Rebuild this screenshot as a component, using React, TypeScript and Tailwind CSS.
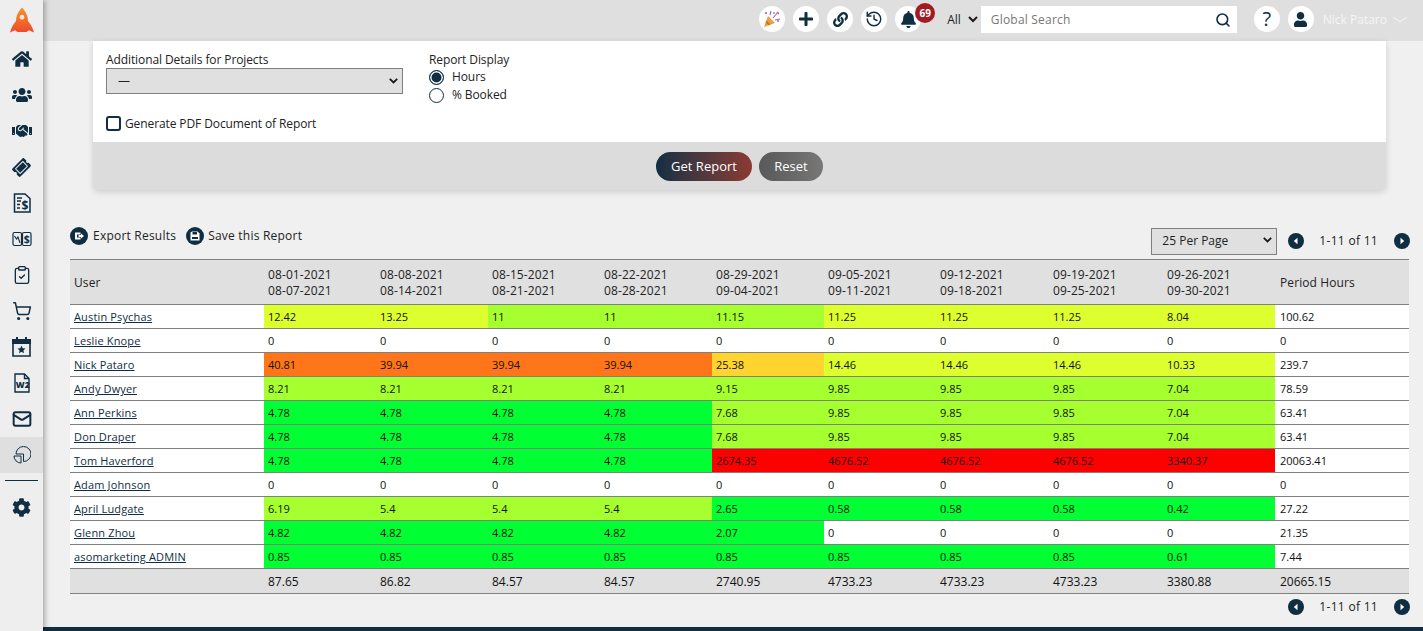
import { ClipboardCheck, History, Mail, Search, ShoppingCart } from "lucide-react";
import { FaBell, FaCog, FaHandshake, FaHome, FaLink, FaPlus, FaTicketAlt, FaUser, FaUsers } from "react-icons/fa";

const navy = "#0f2e42";

type Tone = "w" | "g" | "y" | "l" | "o" | "a" | "r";

const toneClass: Record<Tone, string> = {
  w: "bg-white",
  g: "bg-[#00ff33]",
  y: "bg-[#a6ff2e]",
  l: "bg-[#deff2e]",
  o: "bg-[#ff7519]",
  a: "bg-[#ffd42e]",
  r: "bg-[#ff0000]",
};

const weeks = [
  ["08-01-2021", "08-07-2021"],
  ["08-08-2021", "08-14-2021"],
  ["08-15-2021", "08-21-2021"],
  ["08-22-2021", "08-28-2021"],
  ["08-29-2021", "09-04-2021"],
  ["09-05-2021", "09-11-2021"],
  ["09-12-2021", "09-18-2021"],
  ["09-19-2021", "09-25-2021"],
  ["09-26-2021", "09-30-2021"],
];

const rows: { name: string; cells: [string, Tone][]; total: string }[] = [
  { name: "Austin Psychas", total: "100.62", cells: [["12.42", "l"], ["13.25", "l"], ["11", "y"], ["11", "y"], ["11.15", "y"], ["11.25", "l"], ["11.25", "l"], ["11.25", "l"], ["8.04", "l"]] },
  { name: "Leslie Knope", total: "0", cells: [["0", "w"], ["0", "w"], ["0", "w"], ["0", "w"], ["0", "w"], ["0", "w"], ["0", "w"], ["0", "w"], ["0", "w"]] },
  { name: "Nick Pataro", total: "239.7", cells: [["40.81", "o"], ["39.94", "o"], ["39.94", "o"], ["39.94", "o"], ["25.38", "a"], ["14.46", "l"], ["14.46", "l"], ["14.46", "l"], ["10.33", "l"]] },
  { name: "Andy Dwyer", total: "78.59", cells: [["8.21", "y"], ["8.21", "y"], ["8.21", "y"], ["8.21", "y"], ["9.15", "y"], ["9.85", "y"], ["9.85", "y"], ["9.85", "y"], ["7.04", "y"]] },
  { name: "Ann Perkins", total: "63.41", cells: [["4.78", "g"], ["4.78", "g"], ["4.78", "g"], ["4.78", "g"], ["7.68", "y"], ["9.85", "y"], ["9.85", "y"], ["9.85", "y"], ["7.04", "y"]] },
  { name: "Don Draper", total: "63.41", cells: [["4.78", "g"], ["4.78", "g"], ["4.78", "g"], ["4.78", "g"], ["7.68", "y"], ["9.85", "y"], ["9.85", "y"], ["9.85", "y"], ["7.04", "y"]] },
  { name: "Tom Haverford", total: "20063.41", cells: [["4.78", "g"], ["4.78", "g"], ["4.78", "g"], ["4.78", "g"], ["2674.35", "r"], ["4676.52", "r"], ["4676.52", "r"], ["4676.52", "r"], ["3340.37", "r"]] },
  { name: "Adam Johnson", total: "0", cells: [["0", "w"], ["0", "w"], ["0", "w"], ["0", "w"], ["0", "w"], ["0", "w"], ["0", "w"], ["0", "w"], ["0", "w"]] },
  { name: "April Ludgate", total: "27.22", cells: [["6.19", "y"], ["5.4", "y"], ["5.4", "y"], ["5.4", "y"], ["2.65", "g"], ["0.58", "g"], ["0.58", "g"], ["0.58", "g"], ["0.42", "g"]] },
  { name: "Glenn Zhou", total: "21.35", cells: [["4.82", "g"], ["4.82", "g"], ["4.82", "g"], ["4.82", "g"], ["2.07", "g"], ["0", "w"], ["0", "w"], ["0", "w"], ["0", "w"]] },
  { name: "asomarketing ADMIN", total: "7.44", cells: [["0.85", "g"], ["0.85", "g"], ["0.85", "g"], ["0.85", "g"], ["0.85", "g"], ["0.85", "g"], ["0.85", "g"], ["0.85", "g"], ["0.61", "g"]] },
];

const totals = ["87.65", "86.82", "84.57", "84.57", "2740.95", "4733.23", "4733.23", "4733.23", "3380.88"];

function Rocket() {
  return (
    <svg width="24" height="27" viewBox="0 0 26 28">
      <defs>
        <linearGradient id="rocket" x1="0" y1="0" x2="0" y2="1">
          <stop offset="0" stopColor="#f7922e" />
          <stop offset="1" stopColor="#ec4a2a" />
        </linearGradient>
      </defs>
      <path
        d="M13 0C17 4 19.500 9 19.500 14.500C21.500 17 24.500 21 26 27L20.500 24.500L18 26.500H8L5.500 24.500L0 27C1.500 21 4.500 17 6.500 14.500C6.500 9 9 4 13 0Z"
        fill="url(#rocket)"
      />
      <circle cx="13" cy="10.500" r="2.600" fill="#fde6d8" />
    </svg>
  );
}

function InvoiceIcon() {
  return (
    <svg width="18" height="20" viewBox="0 0 18 20" fill="none" stroke={navy} strokeWidth="1.500">
      <path d="M1.500 1H12L17 5.500V19H1.500Z" />
      <path d="M4 5H9M4 8H8M4 11.500H7M4 15H7" />
      <text x="8.500" y="16.500" fontSize="12" fontWeight="700" fill={navy} stroke="none" fontFamily="Open Sans, sans-serif">$</text>
    </svg>
  );
}

function LedgerIcon() {
  return (
    <svg width="20" height="16" viewBox="0 0 20 16" fill="none" stroke={navy} strokeWidth="1.200">
      <rect x="1" y="1.500" width="8.500" height="13" rx="1.500" />
      <rect x="10.500" y="1.500" width="8.500" height="13" rx="1.500" />
      <path d="M2.500 5L4.500 8L6 6L8 12" strokeWidth="1.100" />
      <text x="11.800" y="12" fontSize="10.500" fontWeight="700" fill={navy} stroke="none" fontFamily="Open Sans, sans-serif">$</text>
    </svg>
  );
}

function CalendarStarIcon() {
  return (
    <svg width="19" height="20" viewBox="0 0 19 20">
      <path d="M4 0H6V2H13V0H15V2H19V7H0V2H4Z" fill={navy} />
      <path d="M1 6H18V19H1Z" fill="none" stroke={navy} strokeWidth="1.600" />
      <path d="M9.500 8.500L10.700 11.200L13.500 11.500L11.400 13.400L12 16.200L9.500 14.800L7 16.200L7.600 13.400L5.500 11.500L8.300 11.200Z" fill={navy} />
    </svg>
  );
}

function W2Icon() {
  return (
    <svg width="16" height="20" viewBox="0 0 16 20" fill="none" stroke={navy} strokeWidth="1.400">
      <path d="M1 1H10.500L15 5.500V19H1Z" />
      <path d="M10.500 1V5.500H15" />
      <text x="1.800" y="15" fontSize="8.500" fontWeight="800" fill={navy} stroke="none" fontFamily="Open Sans, sans-serif">W2</text>
    </svg>
  );
}

function PieIcon() {
  return (
    <svg width="18" height="18" viewBox="0 0 18 18" fill="none" stroke={navy} strokeWidth="1">
      <path d="M3 8A7.500 7.500 0 1 1 10.500 15.500V8Z" />
      <path d="M1 10H8V17A7 7 0 0 1 1 10Z" />
    </svg>
  );
}

function PartyIcon() {
  return (
    <svg width="18" height="18" viewBox="0 0 18 18">
      <path d="M1 17L5 6L12 13Z" fill="#e9a23b" />
      <path d="M3.500 10.500L7.500 14.500L5.500 15.300L2.700 12.500Z" fill="#c9702a" />
      <circle cx="3" cy="3" r="1.100" fill="#d94b8c" />
      <circle cx="15" cy="11" r="1" fill="#4a90d9" />
      <circle cx="11" cy="3" r="1" fill="#5cb85c" />
      <path d="M7 5L8 1M10 8L15 2M12 10L17 9" stroke="#b05cc9" strokeWidth="1.100" fill="none" />
      <path d="M14 2L16 4" stroke="#e0584f" strokeWidth="1.100" />
    </svg>
  );
}

function NavItem({ active, children }: { active?: boolean; children: React.ReactNode }) {
  return <div className={`flex h-9 items-center justify-center ${active ? "bg-[#dfdfdf]" : ""}`}>{children}</div>;
}

function Sidebar() {
  return (
    <aside className="relative z-10 flex h-full w-[43px] shrink-0 flex-col bg-[#eeeeee] shadow-[2px_0_5px_rgba(0,0,0,0.3)]">
      <div className="flex h-[41px] items-start justify-center pt-[7px]">
        <Rocket />
      </div>
      <NavItem><FaHome size={20} color={navy} /></NavItem>
      <NavItem><FaUsers size={20} color={navy} /></NavItem>
      <NavItem><FaHandshake size={20} color={navy} /></NavItem>
      <NavItem><FaTicketAlt size={17} color={navy} className="-rotate-45" /></NavItem>
      <NavItem><InvoiceIcon /></NavItem>
      <NavItem><LedgerIcon /></NavItem>
      <NavItem><ClipboardCheck size={20} color={navy} strokeWidth={1.600} /></NavItem>
      <NavItem><ShoppingCart size={20} color={navy} strokeWidth={1.800} /></NavItem>
      <NavItem><CalendarStarIcon /></NavItem>
      <NavItem><W2Icon /></NavItem>
      <NavItem><Mail size={20} color={navy} strokeWidth={2.400} /></NavItem>
      <NavItem active><PieIcon /></NavItem>
      <div className="mx-[5px] mt-[7px] h-px bg-[#0f2e42]" />
      <div className="mt-2">
        <NavItem><FaCog size={19} color={navy} /></NavItem>
      </div>
    </aside>
  );
}

function RoundIcon({ children }: { children: React.ReactNode }) {
  return <div className="flex h-[26px] w-[26px] shrink-0 items-center justify-center rounded-full bg-white">{children}</div>;
}

function TopBar() {
  return (
    <header className="flex h-[41px] shrink-0 items-start justify-end bg-[#dfdfdf] pt-[6px] pr-[16px]">
      <div className="flex items-center gap-2">
        <RoundIcon><PartyIcon /></RoundIcon>
        <RoundIcon><FaPlus size={16} color={navy} /></RoundIcon>
        <RoundIcon><FaLink size={15} color={navy} /></RoundIcon>
        <RoundIcon><History size={18} color={navy} strokeWidth={1.900} /></RoundIcon>
        <div className="relative">
          <RoundIcon><FaBell size={17} color={navy} /></RoundIcon>
          <span className="absolute -top-[3px] left-[20px] flex h-[20px] w-[20px] items-center justify-center rounded-full bg-[#a11c22] text-[10px] font-bold text-white">69</span>
        </div>
      </div>
      <span className="ml-[26px] flex h-[27px] items-center text-[12px] text-[#222]">All</span>
      <svg className="mt-[10px] ml-[7px]" width="10" height="7" viewBox="0 0 10 7" fill="none" stroke="#1a1a1a" strokeWidth="2">
        <path d="M1 1L5 5L9 1" />
      </svg>
      <div className="ml-[3px] flex h-[27px] w-[256px] items-center justify-between bg-white pr-[6px] pl-[10px]">
        <span className="text-[12px] tracking-[0.2px] text-[#777]">Global Search</span>
        <Search size={16} color={navy} strokeWidth={2.400} />
      </div>
      <div className="ml-[17px] flex items-center gap-2">
        <RoundIcon><span className="text-[20px] leading-none text-[#0f2e42]">?</span></RoundIcon>
        <RoundIcon><FaUser size={15} color={navy} /></RoundIcon>
      </div>
      <span className="ml-[9px] flex h-[27px] items-center text-[12px] text-[#f5f5f5]">Nick Pataro</span>
      <svg className="mt-[11px] ml-[6px]" width="14" height="6" viewBox="0 0 14 6" fill="none" stroke="#f5f5f5" strokeWidth="1">
        <path d="M0.500 0.500L7 4.500L13.500 0.500" />
      </svg>
    </header>
  );
}

function ReportForm() {
  return (
    <section className="mr-[37px] ml-[50px] rounded-b-[6px] bg-[#dcdcdc] shadow-[0_2px_6px_rgba(0,0,0,0.15)]">
      <div className="h-[101px] bg-white px-[13px] pt-[11px] text-[12px] tracking-[-0.1px] text-[#222]">
        <div className="flex">
          <div className="w-[323px]">
            <label className="block leading-[16px]">Additional Details for Projects</label>
            <div className="relative h-[26px] w-[297px]">
              <select className="h-full w-full appearance-none border border-[#808080] bg-[#e0e0e0] pl-[11px] text-[12px] text-[#222]">
                <option>—</option>
              </select>
              <svg className="pointer-events-none absolute top-[10px] right-[5px]" width="9" height="6" viewBox="0 0 9 6" fill="none" stroke="#1a1a1a" strokeWidth="1.800">
                <path d="M0.800 0.800L4.500 4.500L8.200 0.800" />
              </svg>
            </div>
          </div>
          <div>
            <div className="leading-[16px]">Report Display</div>
            <label className="flex h-[18px] items-center gap-2">
              <input type="radio" name="display" defaultChecked className="h-[15px] w-[15px] appearance-none rounded-full border border-[#0f2e42] checked:bg-[#0f2e42] checked:shadow-[inset_0_0_0_1.500px_white]" />
              Hours
            </label>
            <label className="flex h-[18px] items-center gap-2">
              <input type="radio" name="display" className="h-[15px] w-[15px] appearance-none rounded-full border border-[#0f2e42]" />
              % Booked
            </label>
          </div>
        </div>
        <label className="mt-[11px] flex h-[18px] items-center gap-1">
          <input type="checkbox" className="-mt-[2px] h-[15px] w-[15px] appearance-none rounded-[3px] border-2 border-[#0f2e42] bg-white" />
          Generate PDF Document of Report
        </label>
      </div>
      <div className="flex h-[48px] items-start justify-center gap-[7px] pt-[10px]">
        <button className="h-[29px] w-[96px] rounded-full bg-gradient-to-r from-[#0f2e42] to-[#8a3a32] text-[13px] text-white">Get Report</button>
        <button className="h-[29px] w-[64px] rounded-full bg-gradient-to-r from-[#595959] to-[#777777] text-[13px] text-white">Reset</button>
      </div>
    </section>
  );
}

function Pager() {
  return (
    <div className="flex items-center">
      <svg width="16" height="16" viewBox="0 0 16 16">
        <circle cx="8" cy="8" r="8" fill={navy} />
        <path d="M9.500 4.800V11.200L5.800 8Z" fill="white" />
      </svg>
      <span className="mr-[16px] ml-[15px] text-[12px] tracking-[0.3px] text-[#222]">1-11 of 11</span>
      <svg width="16" height="16" viewBox="0 0 16 16">
        <circle cx="8" cy="8" r="8" fill={navy} />
        <path d="M6.500 4.800V11.200L10.200 8Z" fill="white" />
      </svg>
    </div>
  );
}

function Toolbar() {
  return (
    <div className="mt-[37px] mr-[13px] ml-[27px] flex h-[27px] justify-between">
      <div className="flex h-[18px] items-center text-[12px] tracking-[0.22px] text-[#222]">
        <svg width="18" height="18" viewBox="0 0 18 18">
          <circle cx="9" cy="9" r="9" fill={navy} />
          <path d="M5 5.500H10.500V7.500H7V10.500H10.500V12.500H5Z" fill="white" />
          <path d="M8.500 8H11V6.500L14 9L11 11.500V10H8.500Z" fill="white" />
        </svg>
        <span className="ml-[5px]">Export Results</span>
        <svg className="ml-[10px]" width="18" height="18" viewBox="0 0 18 18">
          <circle cx="9" cy="9" r="9" fill={navy} />
          <path d="M4.500 5.500L6 4.500H11.500L13.500 6.500V13.500H4.500Z" fill="white" />
          <rect x="6.500" y="5" width="4.500" height="2.500" fill={navy} />
          <rect x="6" y="10" width="6" height="2" fill={navy} />
        </svg>
        <span className="ml-[4px]">Save this Report</span>
      </div>
      <div className="flex items-center">
        <div className="relative mr-[11px] h-[27px] w-[126px]">
          <select className="h-full w-full appearance-none border border-[#808080] bg-[#e0e0e0] pl-[10px] text-[12px] text-[#222]">
            <option>25 Per Page</option>
          </select>
          <svg className="pointer-events-none absolute top-[10px] right-[5px]" width="9" height="6" viewBox="0 0 9 6" fill="none" stroke="#1a1a1a" strokeWidth="1.800">
            <path d="M0.800 0.800L4.500 4.500L8.200 0.800" />
          </svg>
        </div>
        <Pager />
      </div>
    </div>
  );
}

function ReportTable() {
  return (
    <div className="mt-[5px] mr-[14px] ml-[27px]">
      <table className="w-full table-fixed border-separate border-spacing-0 text-left text-[11px] text-[#111]">
        <colgroup>
          <col className="w-[194px]" />
          <col className="w-[112px]" />
          <col className="w-[112px]" />
          <col className="w-[112px]" />
          <col className="w-[112px]" />
          <col className="w-[112px]" />
          <col className="w-[112px]" />
          <col className="w-[113px]" />
          <col className="w-[114px]" />
          <col className="w-[112px]" />
          <col />
        </colgroup>
        <thead>
          <tr className="bg-[#e0e0e0] text-[12px] leading-[16px] tracking-[0.1px] text-[#222]">
            <th className="h-[46px] border-y border-[#808080] px-1 pt-[2px] font-normal">User</th>
            {weeks.map((w) => (
              <th key={w[0]} className="h-[46px] border-y border-[#808080] px-1 pt-[2px] font-normal">
                {w[0]}
                <br />
                {w[1]}
              </th>
            ))}
            <th className="h-[46px] border-y border-[#808080] pt-[2px] pr-1 pl-[5px] font-normal">Period Hours</th>
          </tr>
        </thead>
        <tbody>
          {rows.map((row) => (
            <tr key={row.name}>
              <td className="h-6 border-b border-[#808080] bg-white px-1 pt-[2px]">
                <a href="#" className="tracking-[0.15px] text-[#0f2e42] underline">{row.name}</a>
              </td>
              {row.cells.map(([value, tone], i) => (
                <td key={i} className={`h-6 border-b border-[#808080] px-1 pt-[2px] ${toneClass[tone]}`}>{value}</td>
              ))}
              <td className="h-6 border-b border-[#808080] bg-white pt-[2px] pr-1 pl-[5px]">{row.total}</td>
            </tr>
          ))}
          <tr className="bg-[#e0e0e0] text-[12px]">
            <td className="h-[25px] border-b border-[#808080] px-1" />
            {totals.map((t, i) => (
              <td key={i} className="h-[25px] border-b border-[#808080] px-1 pt-[2px]">{t}</td>
            ))}
            <td className="h-[25px] border-b border-[#808080] pt-[2px] pr-1 pl-[5px]">20665.15</td>
          </tr>
        </tbody>
      </table>
    </div>
  );
}

export default function App() {
  return (
    <div className="flex h-screen overflow-hidden bg-[#f0f0f0] font-['Open_Sans',sans-serif]">
      <Sidebar />
      <div className="flex min-w-0 flex-1 flex-col">
        <TopBar />
        <main className="flex-1">
          <ReportForm />
          <Toolbar />
          <ReportTable />
          <div className="mt-[4px] mr-[13px] flex justify-end">
            <Pager />
          </div>
        </main>
        <div className="h-1 shrink-0 bg-[#0f2e42]" />
      </div>
    </div>
  );
}
